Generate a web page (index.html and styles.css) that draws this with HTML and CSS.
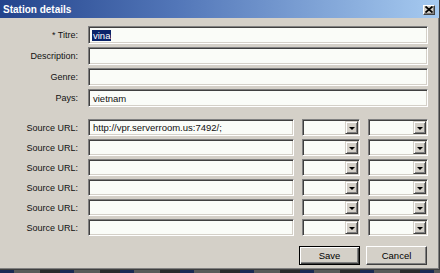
FILE: index.html
```html
<!DOCTYPE html>
<html>
<head>
<meta charset="utf-8">
<link rel="stylesheet" href="styles.css">
</head>
<body>
<div class="window">
  <div class="titlebar">
    <span class="title">Station details</span>
    <span class="close"><svg width="8" height="7" viewBox="0 0 8 7"><path d="M0.5 0.5 L7.5 6.5 M7.5 0.5 L0.5 6.5" stroke="#000" stroke-width="1.8"/></svg></span>
  </div>
  <div class="content">
    <div class="grid top">
      <label>* Titre:</label><div class="field wide"><span class="sel">vina</span></div>
      <label>Description:</label><div class="field wide"></div>
      <label>Genre:</label><div class="field wide"></div>
      <label>Pays:</label><div class="field wide">vietnam</div>
    </div>
    <div class="grid sources">
      <label>Source URL:</label><div class="field">http://vpr.serverroom.us:7492/;</div><div class="field combo"><span class="btn"><i></i></span></div><div class="field combo"><span class="btn"><i></i></span></div>
      <label>Source URL:</label><div class="field"></div><div class="field combo"><span class="btn"><i></i></span></div><div class="field combo"><span class="btn"><i></i></span></div>
      <label>Source URL:</label><div class="field"></div><div class="field combo"><span class="btn"><i></i></span></div><div class="field combo"><span class="btn"><i></i></span></div>
      <label>Source URL:</label><div class="field"></div><div class="field combo"><span class="btn"><i></i></span></div><div class="field combo"><span class="btn"><i></i></span></div>
      <label>Source URL:</label><div class="field"></div><div class="field combo"><span class="btn"><i></i></span></div><div class="field combo"><span class="btn"><i></i></span></div>
      <label>Source URL:</label><div class="field"></div><div class="field combo"><span class="btn"><i></i></span></div><div class="field combo"><span class="btn"><i></i></span></div>
    </div>
    <div class="buttons">
      <div class="pbtn default"><span>Save</span></div>
      <div class="pbtn"><span>Cancel</span></div>
    </div>
  </div>
</div>
<div class="taskbar"></div>
</body>
</html>
```
FILE: styles.css
```css
html, body {
  margin: 0;
  padding: 0;
  background: #2b2f3a;
}
body {
  width: 440px;
  height: 273px;
  overflow: hidden;
  font-family: "Liberation Sans", Arial, sans-serif;
  font-size: 9px;
  color: #000;
}
.window {
  width: 440px;
  height: 270px;
  box-sizing: border-box;
  background: #d4d0c8;
  border-right: 1px solid #404040;
  border-bottom: 1px solid #404040;
  box-shadow: inset -1px -1px #808080;
  display: flex;
  flex-direction: column;
}
.titlebar {
  height: 18px;
  display: flex;
  align-items: center;
  justify-content: space-between;
  padding: 0 4px 0 3px;
  background: linear-gradient(to right, #24448c 0%, #5276b8 40%, #a6caf0 100%);
  flex: none;
}
.title {
  color: #fff;
  font-weight: bold;
  font-size: 10px;
}
.close {
  width: 12px;
  height: 10px;
  box-sizing: border-box;
  background: #d4d0c8;
  border: 1px solid;
  border-color: #fff #404040 #404040 #fff;
  box-shadow: inset -1px -1px #808080;
  display: flex;
  align-items: center;
  justify-content: center;
  margin-top: 1px;
}
.content {
  padding-top: 8px;
  display: flex;
  flex-direction: column;
}
.grid {
  display: grid;
  grid-template-columns: 80px 206px 58px 60px;
  column-gap: 8px;
}
.top {
  grid-auto-rows: 18px;
  row-gap: 3px;
}
.sources {
  margin-top: 12px;
  grid-auto-rows: 17px;
  row-gap: 3px;
}
label {
  text-align: right;
  padding-right: 2px;
  display: flex;
  align-items: center;
  justify-content: flex-end;
  color: #111;
}
.field {
  box-sizing: border-box;
  background: #fafcf8;
  border: 1px solid;
  border-color: #808080 #fff #fff #808080;
  box-shadow: inset 1px 1px #404040, inset -1px -1px #d4d0c8;
  padding-left: 4px;
  display: flex;
  align-items: center;
  white-space: nowrap;
  overflow: hidden;
  color: #111;
  font-size: 9.5px;
}
.wide {
  grid-column: 2 / 5;
}
.sel {
  background: #0a246a;
  color: #fff;
  margin-left: -1px;
  padding: 0 1px;
  line-height: 11px;
}
.combo {
  justify-content: flex-end;
  padding: 1px 1px 1px 0;
}
.btn {
  width: 13px;
  height: 100%;
  box-sizing: border-box;
  background: #d4d0c8;
  border: 1px solid;
  border-color: #d4d0c8 #404040 #404040 #d4d0c8;
  box-shadow: inset 1px 1px #fff, inset -1px -1px #808080;
  display: flex;
  align-items: center;
  justify-content: center;
}
.btn i {
  width: 0;
  height: 0;
  border-left: 3px solid transparent;
  border-right: 3px solid transparent;
  border-top: 3px solid #000;
  margin-top: 1px;
}
.buttons {
  margin-top: 10px;
  display: flex;
  justify-content: flex-end;
  gap: 6px;
  padding-right: 12px;
}
.pbtn {
  width: 61px;
  height: 19px;
  box-sizing: border-box;
  background: #d4d0c8;
  border: 1px solid;
  border-color: #fff #404040 #404040 #fff;
  box-shadow: inset -1px -1px #808080;
  display: flex;
  align-items: center;
  justify-content: center;
  font-size: 9.5px;
}
.pbtn.default {
  border: 1px solid #000;
  box-shadow: inset 1px 1px #fff, inset -1px -1px #404040, inset -2px -2px #808080;
}
.taskbar {
  height: 3px;
  background: repeating-linear-gradient(to right, #1b2a55 0px, #1b2a55 14px, #5a5a5a 14px, #5a5a5a 40px, #2a2a2a 40px, #2a2a2a 60px);
}
```
